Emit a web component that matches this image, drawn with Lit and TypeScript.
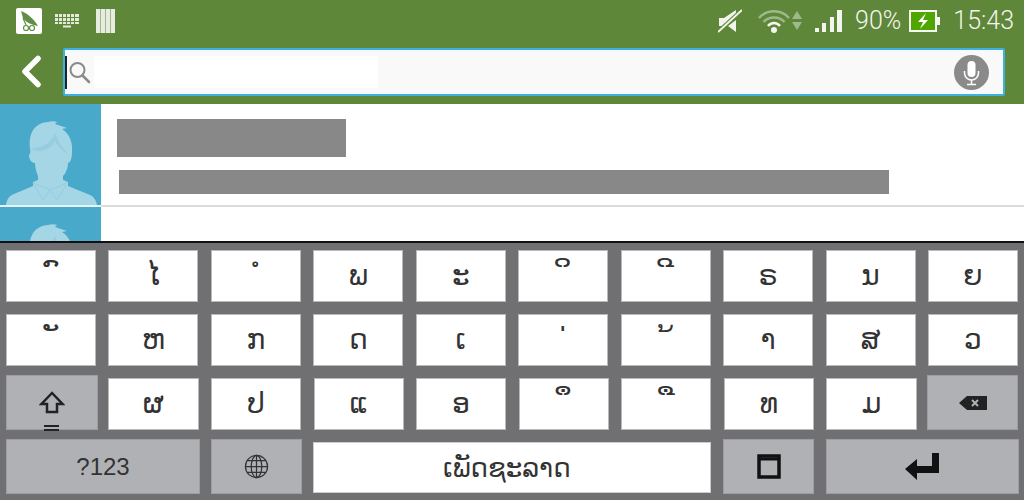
import { LitElement, html, css, svg } from "lit";
import { customElement } from "lit/decorators.js";

const NB = "\u00a0";
const row1 = [NB + "ົ", "ໄ", NB + "ໍ", "ພ", "ະ", NB + "ິ", NB + "ີ", "ຣ", "ນ", "ຍ"];
const row2 = [NB + "ັ", "ຫ", "ກ", "ດ", "ເ", NB + "່", NB + "້", "າ", "ສ", "ວ"];
const row3 = ["ຜ", "ປ", "ແ", "ອ", NB + "ຶ", NB + "ື", "ທ", "ມ"];

const person = svg`
  <path fill="#a5d6e6" d="M6 101 C7 95 9 92 14 90 L33 82 L33 78 L38 76 L38 72 C36 67 35 63 35 59 C31 59 29 55 29 51 C30 49 31 48 30 45 C28 30 34 19 48 18 C51 17 54 17 57 18 L55 20 L67 24 L62 25 C69 29 73 38 72 48 C72 55 70 59 68 59 C68 64 66 69 63 72 L63 76 L68 78 L68 82 L90 91 C94 93 96 96 97 101 Z"/>
  <path fill="#93cadd" opacity=".75" d="M55 29 C52 37 46 43 30 45 C40 49 50 47 55 37 C58 43 62 47 68 49 C62 44 58 37 55 29 Z"/>
  <path fill="none" stroke="#96ccdf" stroke-width="1" d="M33 79 L50 86 L67 79 M33 79 L43 96 L50 86 L57 96 L67 79"/>`;

@customElement("app-root")
export class AppRoot extends LitElement {
  static styles = css`
    :host { display: block; width: 1024px; height: 500px; overflow: hidden; background: #fff; font-family: "Roboto", "Liberation Sans", sans-serif; }
    svg { display: block; flex: none; }
    .top { background: #5f8739; height: 104px; display: flex; flex-direction: column; }
    .status { height: 48px; display: flex; align-items: center; padding: 0 10px 7px 16px; box-sizing: border-box; color: #f2f5ee; }
    .logo { width: 26px; height: 26px; background: #fff; border-radius: 2px; display: flex; align-items: center; justify-content: center; }
    .kbd-ic { margin-left: 13px; }
    .bars-ic { margin-left: 17px; }
    .mute { margin-left: auto; }
    .wifi { margin-left: 16px; }
    .arrows { margin-left: 2px; }
    .signal { margin-left: 13px; }
    .pct { margin-left: 13px; font-size: 25px; font-weight: 300; line-height: 28px; }
    .batt { margin-left: 8px; }
    .time { margin-left: 13px; font-size: 25px; font-weight: 300; line-height: 28px; }
    .search { display: flex; align-items: flex-start; padding-left: 21px; }
    .back { margin-right: 22px; margin-top: 7px; }
    .input { width: 942px; height: 48px; box-sizing: border-box; border: 2px solid #3cb2e2; border-radius: 2px; background: #f9f9f9; display: flex; align-items: center; }
    .cursor { width: 2px; height: 33px; background: #222; flex: none; }
    .mag { margin-left: 1px; }
    .patch { width: 284px; height: 32px; background: #fff; margin-left: 3px; }
    .mic { margin-left: auto; margin-right: 14px; }
    .list { height: 137px; overflow: hidden; }
    .item { display: flex; height: 103px; background: #fff; }
    .avatar { width: 101px; height: 103px; box-sizing: border-box; border-bottom: 2px solid #e8f3f7; background: #49a9cb; flex: none; }
    .lines { flex: 1; height: 103px; box-sizing: border-box; border-bottom: 2px solid #dcdcdc; display: flex; flex-direction: column; align-items: flex-start; padding-left: 16px; padding-top: 15px; }
    .r1 { width: 229px; height: 38px; background: #888; }
    .r2 { width: 770px; height: 24px; background: #888; margin-left: 2px; margin-top: 13px; }
    .kb { height: 259px; box-sizing: border-box; border-top: 2px solid #111; background: #707072; padding: 7px 6px 0; display: flex; flex-direction: column; }
    .row { display: flex; gap: 12.400px; }
    .row + .row { margin-top: 12px; }
    .row.third { margin-top: 9px; align-items: flex-end; }
    .row.fourth { margin-top: 9px; align-items: flex-end; }
    .key { flex: 1 1 0; min-width: 0; height: 52px; box-sizing: border-box; background: #fff; border: 1px solid #b9b9bb; display: flex; align-items: center; justify-content: center; font-family: "DejaVu Sans", "Noto Sans", sans-serif; font-size: 28px; color: #333; line-height: 1; }
    .mark { padding-left: 8px; }
    .fn { background: #b0b1b5; border-color: #9d9ea2; }
    .shift { flex: none; width: 92px; height: 55px; position: relative; margin-right: -2px; }
    .shift .eq { position: absolute; left: 37px; bottom: -2px; width: 15px; height: 6px; border-top: 2px solid #222; border-bottom: 2px solid #222; box-sizing: border-box; }
    .del { flex: none; width: 91px; height: 55px; margin-left: -2px; }
    .w { flex: none; height: 55px; }
    .qm { width: 194px; font-family: "Liberation Sans", sans-serif; font-size: 24px; }
    .globe { width: 91px; margin-left: -1px; }
    .space { flex: none; width: 398px; height: 51px; margin-left: -2px; margin-bottom: 1px; padding-right: 10px; border-color: #ccc; font-size: 26px; }
    .sq { width: 91px; }
    .enter { width: 193px; margin-left: -1px; }
  `;

  private ch(list: string[]) {
    return list.map((c) =>
      html`<div class="key"><span class="${c.startsWith(NB) ? "mark" : ""}">${c}</span></div>`
    );
  }

  render() {
    return html`
      <div class="top">
        <div class="status">
          <div class="logo">
            <svg width="22" height="22" viewBox="0 0 22 22">
              <path fill="#5f8f45" d="M3 1 C9 3 16 9 20 16 C14 15 7 12 5 8 Z"/>
              <path fill="none" stroke="#5f8f45" stroke-width="1.200" d="M5 8 L8 15"/>
              <circle cx="8" cy="18" r="2.500" fill="none" stroke="#5f8f45" stroke-width="1.200"/>
              <circle cx="14" cy="18" r="2.500" fill="none" stroke="#5f8f45" stroke-width="1.200"/>
            </svg>
          </div>
          <svg class="kbd-ic" width="24" height="14" viewBox="0 0 24 14" fill="#e4ebdc">
            <path d="M0 0h24v3H0zM0 4h24v3H0zM0 8h24v2H0z"/>
            <path fill="#5f8739" d="M3 0h1v10H3zM7 0h1v10H7zM11 0h1v10h-1zM15 0h1v10h-1zM19 0h1v10h-1z"/>
            <path d="M8 11.500h8v2H8z"/>
          </svg>
          <svg class="bars-ic" width="19" height="24" viewBox="0 0 19 24">
            <rect width="19" height="24" fill="#e6ecdf"/>
            <path stroke="#9fb78a" d="M4.500 0v24M9.500 0v24M14.500 0v24"/>
          </svg>
          <svg class="mute" width="24" height="24" viewBox="0 0 24 24">
            <path fill="#f2f5ee" d="M1 9h5l12-8v4L4 17H1zM18 11v12l-8-6z"/>
            <path stroke="#5f8739" stroke-width="4" d="M0 23L24 1"/>
            <path stroke="#f2f5ee" stroke-width="2" d="M0 23L24 1"/>
          </svg>
          <svg class="wifi" width="32" height="24" viewBox="0 0 32 24" fill="none">
            <path stroke="#9fb98a" stroke-width="2.500" d="M1 9C9 0 23 0 31 9"/>
            <path stroke="#9fb98a" stroke-width="2.500" d="M5.500 13C11 7 21 7 26.500 13"/>
            <path stroke="#f2f5ee" stroke-width="2.500" d="M10 17C13 13 19 13 22 17"/>
            <circle cx="16" cy="21" r="3" fill="#f2f5ee"/>
          </svg>
          <svg class="arrows" width="10" height="20" viewBox="0 0 10 20" fill="#9fb98a">
            <path d="M5 0l5 8H0zM0 11h10l-5 8z"/>
          </svg>
          <svg class="signal" width="27" height="24" viewBox="0 0 27 24" fill="#f2f5ee">
            <rect x="0" y="19" width="4" height="4"/>
            <rect x="7" y="14" width="4" height="9"/>
            <rect x="15" y="8" width="4" height="15"/>
            <rect x="22" y="1" width="5" height="22"/>
          </svg>
          <span class="pct">90%</span>
          <svg class="batt" width="31" height="22" viewBox="0 0 31 22">
            <rect x="1" y="1" width="26" height="20" fill="#4fa600" stroke="#f5f7f0" stroke-width="2"/>
            <rect x="27" y="7" width="4" height="8" fill="#f5f7f0"/>
            <path fill="#fff" d="M17 3L9 12h5l-3 7 8-9h-5z"/>
          </svg>
          <span class="time">15:43</span>
        </div>
        <div class="search">
          <svg class="back" width="20" height="33" viewBox="0 0 20 33" fill="none">
            <path stroke="#fff" stroke-width="5.500" stroke-linecap="round" stroke-linejoin="round" d="M17 3.500L4 16.500L17 29.500"/>
          </svg>
          <div class="input">
            <div class="cursor"></div>
            <svg class="mag" width="23" height="24" viewBox="0 0 23 24" fill="none">
              <circle cx="9.500" cy="10" r="7" stroke="#8a8a8a" stroke-width="2"/>
              <path stroke="#8a8a8a" stroke-width="2.500" stroke-linecap="round" d="M14.500 15.500L21 22"/>
            </svg>
            <div class="patch"></div>
            <svg class="mic" width="35" height="35" viewBox="0 0 35 35">
              <circle cx="17.500" cy="17.500" r="17.500" fill="#8a8a8a"/>
              <rect x="13.500" y="6" width="8" height="16" rx="4" fill="#fff"/>
              <path fill="none" stroke="#fff" stroke-width="1.500" d="M10.500 16v2a7 7 0 0 0 14 0v-2M17.500 25v4M13 29.500h9"/>
            </svg>
          </div>
        </div>
      </div>
      <div class="list">
        <div class="item">
          <div class="avatar"><svg width="101" height="101" viewBox="0 0 101 101">${person}</svg></div>
          <div class="lines"><div class="r1"></div><div class="r2"></div></div>
        </div>
        <div class="item">
          <div class="avatar"><svg width="101" height="101" viewBox="0 0 101 101">${person}</svg></div>
          <div class="lines"></div>
        </div>
      </div>
      <div class="kb">
        <div class="row">${this.ch(row1)}</div>
        <div class="row">${this.ch(row2)}</div>
        <div class="row third">
          <div class="key fn shift">
            <svg width="26" height="24" viewBox="0 0 26 24" fill="none"><path stroke="#222" stroke-width="2.500" d="M13 2L2.500 13H8v8h10v-8h5.500z"/></svg>
            <span class="eq"></span>
          </div>
          ${this.ch(row3)}
          <div class="key fn del">
            <svg width="28" height="16" viewBox="0 0 28 16"><path fill="#222" d="M0 8L8 1h20v14H8z"/><path stroke="#b0b1b5" stroke-width="2" d="M13 5l6 6M19 5l-6 6"/></svg>
          </div>
        </div>
        <div class="row fourth">
          <div class="key fn w qm">?123</div>
          <div class="key fn w globe">
            <svg width="25" height="25" viewBox="0 0 26 26" fill="none" stroke="#333" stroke-width="1.300"><circle cx="13" cy="13" r="11.500"/><ellipse cx="13" cy="13" rx="5.500" ry="11.500"/><path d="M13 1.500v23M1.500 13h23M3.500 7h19M3.500 19h19"/></svg>
          </div>
          <div class="key space">ເພັດຊະລາດ</div>
          <div class="key fn w sq">
            <svg width="24" height="25" viewBox="0 0 24 25" fill="none"><rect x="2" y="2" width="20" height="21" stroke="#111" stroke-width="3.500"/><path stroke="#111" stroke-width="3" d="M2 5h20"/></svg>
          </div>
          <div class="key fn w enter">
            <svg width="34" height="27" viewBox="0 0 34 27" fill="#111"><path d="M27 0h7v20H12v7L0 16l12-10v7h15z"/></svg>
          </div>
        </div>
      </div>
    `;
  }
}
